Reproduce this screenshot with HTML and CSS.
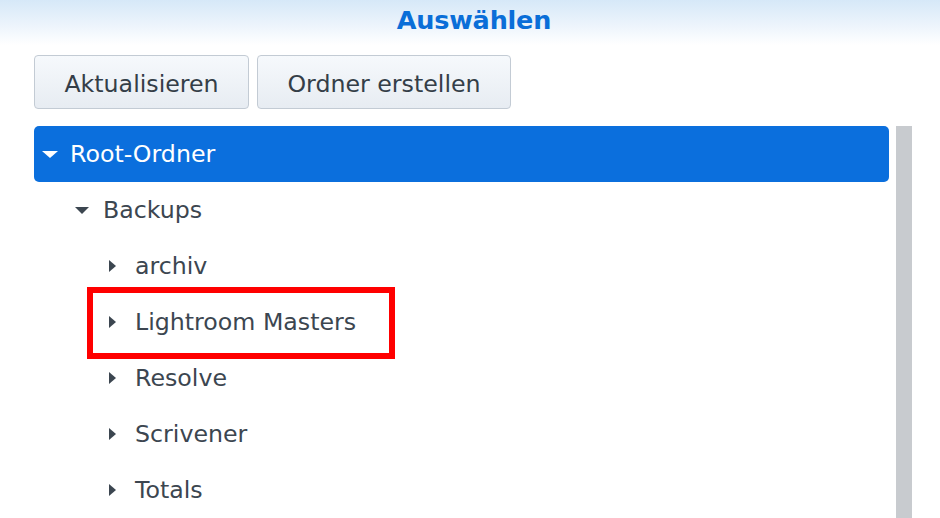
FILE: index.html
```html
<!DOCTYPE html>
<html lang="de">
<head>
<meta charset="utf-8">
<title>Auswählen</title>
<link rel="stylesheet" href="styles.css">
</head>
<body>
<div class="dialog">
  <header class="header"><h1 class="title">Auswählen</h1></header>
  <div class="toolbar">
    <button class="btn">Aktualisieren</button>
    <button class="btn">Ordner erstellen</button>
  </div>
  <div class="tree-wrap">
    <ul class="tree">
      <li class="row selected lvl0"><span class="arrow down"></span><span class="label">Root-Ordner</span></li>
      <li class="row lvl1"><span class="arrow down"></span><span class="label">Backups</span></li>
      <li class="row lvl2"><span class="arrow right"></span><span class="label">archiv</span></li>
      <li class="row lvl2 marked"><span class="arrow right"></span><span class="label">Lightroom Masters</span><span class="highlight"></span></li>
      <li class="row lvl2"><span class="arrow right"></span><span class="label">Resolve</span></li>
      <li class="row lvl2"><span class="arrow right"></span><span class="label">Scrivener</span></li>
      <li class="row lvl2"><span class="arrow right"></span><span class="label">Totals</span></li>
    </ul>
    <div class="scrollbar"></div>
  </div>
</div>
</body>
</html>
```
FILE: styles.css
```css
html, body {
  margin: 0;
  padding: 0;
  background: #ffffff;
  overflow: hidden;
}
body {
  width: 940px;
  height: 518px;
  font-family: "DejaVu Sans", Verdana, sans-serif;
  color: #3c4650;
}
.dialog {
  display: flex;
  flex-direction: column;
  height: 518px;
}
.header {
  height: 45px;
  background: linear-gradient(to bottom, #d6e8f8 0%, #eef5fc 60%, #ffffff 100%);
  display: flex;
  justify-content: center;
  align-items: flex-start;
}
.title {
  margin: 5px 0 0 0;
  padding-left: 8px;
  font-size: 25.5px;
  font-weight: bold;
  color: #0a6ed8;
  line-height: 30px;
  letter-spacing: -0.2px;
}
.toolbar {
  display: flex;
  gap: 8px;
  padding: 10px 0 0 34px;
  height: 54px;
}
.btn {
  height: 54px;
  box-sizing: border-box;
  border: 1px solid #c3cbd4;
  border-radius: 4px;
  background: linear-gradient(to bottom, #f6f9fc 0%, #e7ecf2 100%);
  font-family: "DejaVu Sans", Verdana, sans-serif;
  font-size: 23.7px;
  color: #343e48;
  padding: 3px 0 0 0;
  cursor: pointer;
}
.btn:first-child { width: 215px; }
.btn:last-child { width: 254px; }
.tree-wrap {
  display: flex;
  gap: 7px;
  margin-top: 17px;
  padding-left: 34px;
  flex: 1;
}
.tree {
  list-style: none;
  margin: 0;
  padding: 0;
  width: 855px;
}
.scrollbar {
  width: 16px;
  background: #c8cbcf;
}
.row {
  position: relative;
  height: 56px;
  display: flex;
  align-items: center;
  font-size: 23.7px;
  color: #3c4650;
}
.row.selected {
  background: #0b6fdd;
  border-radius: 5px;
  color: #ffffff;
}
.lvl0 { padding-left: 8px; }
.lvl1 { padding-left: 40px; }
.lvl2 { padding-left: 72px; }
.arrow {
  width: 16px;
  height: 16px;
  display: flex;
  align-items: center;
  justify-content: center;
  margin-right: 12px;
  flex: none;
}
.lvl1 .arrow { margin-right: 13px; }
.lvl2 .arrow { margin-right: 13px; }
.arrow.down::before {
  content: "";
  border-left: 8px solid transparent;
  border-right: 8px solid transparent;
  border-top: 7px solid currentColor;
}
.lvl1 .arrow.down::before {
  border-left-width: 7.5px;
  border-right-width: 7.5px;
  color: #3c4650;
}
.arrow.right::before {
  content: "";
  border-top: 6px solid transparent;
  border-bottom: 6px solid transparent;
  border-left: 7px solid #3c4650;
  margin-left: -3px;
}
.label {
  line-height: 56px;
  white-space: nowrap;
}
.highlight {
  position: absolute;
  left: 53px;
  top: -7px;
  width: 308px;
  height: 72px;
  box-sizing: border-box;
  border: 6px solid #ff0000;
  pointer-events: none;
}
```
